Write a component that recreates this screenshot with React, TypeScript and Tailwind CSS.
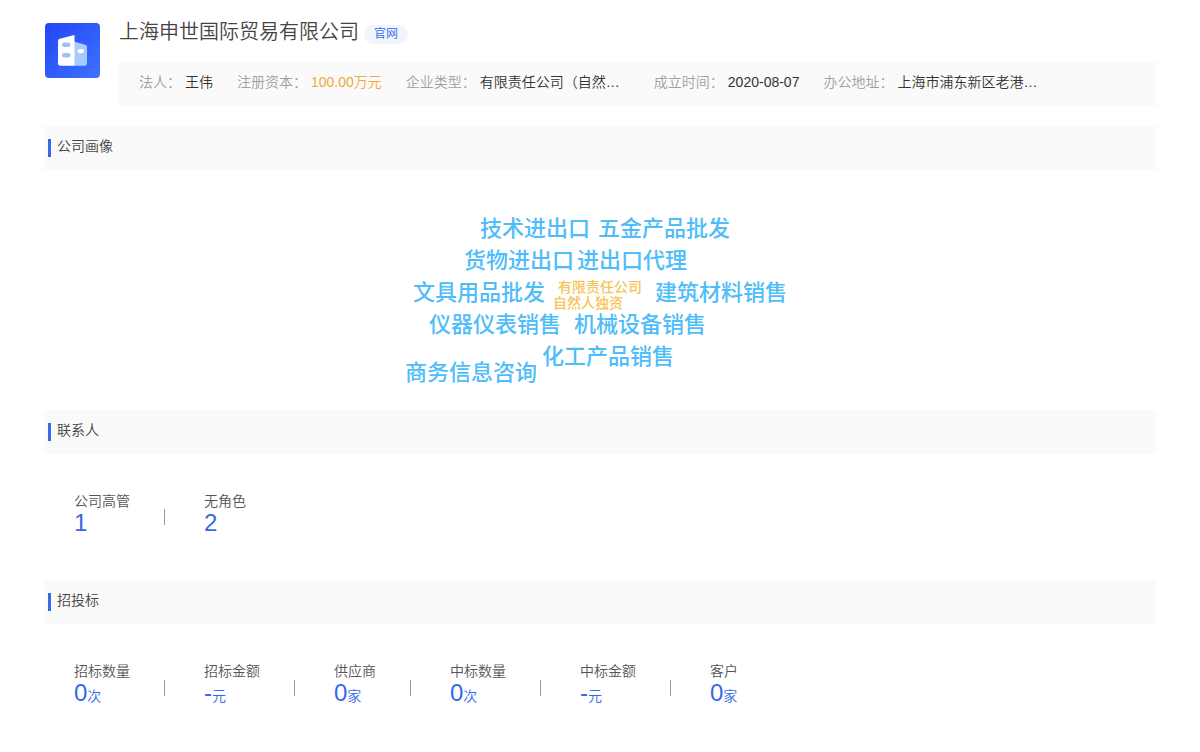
import React from "react";

type Word = { text: string; x: number; y: number; minor?: boolean };
type Stat = { label: string; value: string; unit?: string };

const info = [
  { label: "法人：", value: "王伟" },
  { label: "注册资本：", value: "100.00万元", highlight: true },
  { label: "企业类型：", value: "有限责任公司（自然…", wide: true },
  { label: "成立时间：", value: "2020-08-07" },
  { label: "办公地址：", value: "上海市浦东新区老港…", wide: true },
];

// x / y of each word on the 400 x 240 cloud canvas
const words: Word[] = [
  { text: "技术进出口", x: 80, y: 43 },
  { text: "五金产品批发", x: 198, y: 43 },
  { text: "货物进出口", x: 64, y: 75 },
  { text: "进出口代理", x: 177, y: 75 },
  { text: "文具用品批发", x: 13, y: 107 },
  { text: "有限责任公司", x: 158, y: 107, minor: true },
  { text: "自然人独资", x: 153, y: 123, minor: true },
  { text: "建筑材料销售", x: 255, y: 107 },
  { text: "仪器仪表销售", x: 29, y: 139 },
  { text: "机械设备销售", x: 174, y: 139 },
  { text: "化工产品销售", x: 142, y: 171 },
  { text: "商务信息咨询", x: 5, y: 187 },
];

const contacts: Stat[] = [
  { label: "公司高管", value: "1" },
  { label: "无角色", value: "2" },
];

const bids: Stat[] = [
  { label: "招标数量", value: "0", unit: "次" },
  { label: "招标金额", value: "-", unit: "元" },
  { label: "供应商", value: "0", unit: "家" },
  { label: "中标数量", value: "0", unit: "次" },
  { label: "中标金额", value: "-", unit: "元" },
  { label: "客户", value: "0", unit: "家" },
];

function CompanyLogo() {
  return (
    <svg viewBox="0 0 55 55" className="mt-[3px] ml-px h-[55px] w-[55px] shrink-0" aria-hidden="true">
      <defs>
        <linearGradient id="logoBg" x1="0" y1="0" x2="1" y2="1">
          <stop offset="0" stopColor="#2445f8" />
          <stop offset="1" stopColor="#3d72ff" />
        </linearGradient>
      </defs>
      <rect width="55" height="55" rx="4" fill="url(#logoBg)" />
      <path d="M29 18.5l11.2 3.2a2.4 2.4 0 0 1 1.8 2.3v16.2a2.5 2.5 0 0 1-2.5 2.5H29z" fill="#a6cbff" />
      <path d="M14.8 15.8L29.5 12v30.7H15.5a2.5 2.5 0 0 1-2.5-2.5V18.2a2.5 2.5 0 0 1 1.8-2.4z" fill="#fff" />
      <rect x="17" y="19.5" width="8.5" height="4.4" rx="2.2" fill="#9fc0f5" />
      <rect x="17" y="30" width="8.5" height="4.4" rx="2.2" fill="#9fc0f5" />
      <rect x="32.5" y="26" width="6.5" height="4.2" rx="2.1" fill="#fff" />
    </svg>
  );
}

function Section({ title, children }: { title: string; children: React.ReactNode }) {
  return (
    <section>
      <div className="flex h-11 items-center bg-[#fafafa] pl-1">
        <span className="mr-1.5 h-[18px] w-[3px] bg-[#3668ea]" />
        <h2 className="pb-1 text-sm leading-5 text-[#444]">{title}</h2>
      </div>
      {children}
    </section>
  );
}

function StatRow({ items }: { items: Stat[] }) {
  return (
    <div className="flex min-h-[126px] items-start pt-[37px] pl-[30px]">
      {items.map((item, i) => (
        <div key={item.label} className="flex items-end">
          {i > 0 && <span className="mr-[39px] mb-2.5 ml-[34px] h-4 w-px bg-[#999]" />}
          <dl>
            <dt className="text-sm leading-5 text-[#555]">{item.label}</dt>
            <dd className="text-2xl leading-6 text-[#3668ea]">
              {item.value}
              {item.unit && <span className="text-sm leading-5">{item.unit}</span>}
            </dd>
          </dl>
        </div>
      ))}
    </div>
  );
}

export default function App() {
  return (
    <main
      lang="zh-CN"
      className="bg-white px-11 pt-5 font-['Liberation_Sans','Noto_Sans_CJK_SC',sans-serif] font-[350]"
    >
      <header className="mb-5 flex gap-[19px]">
        <CompanyLogo />
        <div className="min-w-0 flex-1">
          <div className="flex h-[42px] items-start gap-[5px]">
            <h1 className="text-xl leading-6 font-[350] text-[#444]">上海申世国际贸易有限公司</h1>
            <a href="#" className="mt-[5px] rounded-full bg-[#eff4fd] px-2.5 text-xs leading-[19px] text-[#3668ea]">
              官网
            </a>
          </div>
          <dl className="flex min-h-11 flex-wrap items-center gap-x-6 bg-[#fafafa] px-5 pb-1 text-sm leading-5">
            {info.map((item) => (
              <div key={item.label} className="flex gap-1">
                <dt className="text-[#a0a0a0]">{item.label}</dt>
                <dd
                  className={
                    item.highlight ? "text-[#f0a83a]" : item.wide ? "w-[150px] truncate text-[#333]" : "text-[#333]"
                  }
                >
                  {item.value}
                </dd>
              </div>
            ))}
          </dl>
        </div>
      </header>

      <Section title="公司画像">
        <div className="relative mx-auto h-60 w-[400px] font-medium">
          {words.map((word) => (
            <span
              key={word.text}
              className={
                word.minor
                  ? "absolute text-sm leading-5 whitespace-nowrap text-[#f8c456]"
                  : "absolute text-[22px] leading-8 whitespace-nowrap text-[#4fbdf9]"
              }
              style={{ left: word.x, top: word.y }}
            >
              {word.text}
            </span>
          ))}
        </div>
      </Section>

      <Section title="联系人">
        <StatRow items={contacts} />
      </Section>

      <Section title="招投标">
        <StatRow items={bids} />
      </Section>
    </main>
  );
}
